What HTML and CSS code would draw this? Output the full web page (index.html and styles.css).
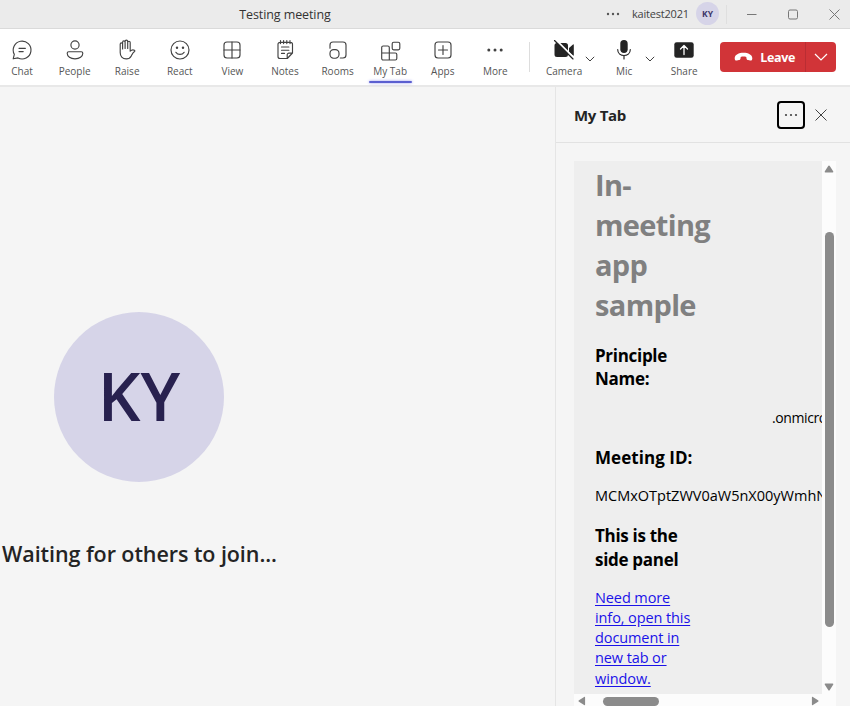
FILE: index.html
```html
<!DOCTYPE html>
<html lang="en">
<head>
<meta charset="utf-8">
<title>Testing meeting</title>
<link rel="stylesheet" href="styles.css">
</head>
<body>
<header class="titlebar">
  <div class="title"><span>Testing meeting</span></div>
  <svg class="dots" width="14" height="4" viewBox="0 0 14 4"><circle cx="2" cy="2" r="1.2"/><circle cx="7" cy="2" r="1.2"/><circle cx="12" cy="2" r="1.2"/></svg>
  <span class="user">kaitest2021</span>
  <span class="avatar-sm">KY</span>
  <span class="sep"></span>
  <svg class="win" width="103" height="14" viewBox="0 0 103 14"><path d="M6 7.500h9.500M88.500 2.500l10 10M98.500 2.500l-10 10"/><rect x="47.500" y="3" width="9" height="9" rx="1.500"/></svg>
</header>
<nav class="toolbar">
  <div class="tools">
    <div class="tool"><svg class="ico" viewBox="0 0 22 22"><path d="M2.200 19.800l1.100-4.500A8.900 8.900 0 1 1 7 18.900zM8 9.300h6.400M8 12.600h4.200"/></svg><span>Chat</span></div>
    <div class="tool"><svg class="ico" viewBox="0 0 22 22"><circle cx="11" cy="6" r="4.100"/><path d="M4.700 12.700h12.600a1.500 1.500 0 0 1 1.500 1.500c0 3.300-3.300 5.600-7.800 5.600s-7.800-2.300-7.800-5.600a1.500 1.500 0 0 1 1.500-1.500z"/></svg><span>People</span></div>
    <div class="tool"><svg class="ico" viewBox="0 0 22 22"><path d="M4.200 12V5.200c0-1.700 2.400-1.700 2.400 0V10M6.600 9V3.200c0-1.700 2.500-1.700 2.500 0V9.500M9.100 9V2.400c0-1.700 2.600-1.700 2.600 0V9.500M11.700 9V3.500c0-1.700 2.500-1.700 2.500 0V12.200c1-1 3-1.600 4.200-.9.600.4.500.9.100 1.200-1.600 1.100-2.300 2.700-3.200 4.400-1 1.900-2.300 3-5 3-4 0-6.100-2.700-6.100-6.500V11"/></svg><span>Raise</span></div>
    <div class="tool"><svg class="ico" viewBox="0 0 22 22"><circle cx="11" cy="11" r="9"/><path d="M6.900 13.300c2 2.800 6.200 2.800 8.200 0"/><circle class="fill" cx="8" cy="8.800" r="1.200"/><circle class="fill" cx="14" cy="8.800" r="1.200"/></svg><span>React</span></div>
    <div class="tool"><svg class="ico" viewBox="0 0 22 22"><rect x="3" y="3" width="16" height="16" rx="3"/><path d="M11 3v16M3 11h16"/></svg><span>View</span></div>
    <div class="tool"><svg class="ico" viewBox="0 0 22 22"><path d="M6 3.300h10.500a2 2 0 0 1 2 2V14l-5.200 5.500H6a2 2 0 0 1-2-2V5.300a2 2 0 0 1 2-2zM13.200 19.300v-3.500a1.700 1.700 0 0 1 1.700-1.700h3.400M7.500 8h7.400M7.500 11.200h7.400M7.500 14.400h3M6.500 1.600v3M9.600 1.600v3M12.800 1.600v3M16 1.600v3"/></svg><span>Notes</span></div>
    <div class="tool"><svg class="ico" viewBox="0 0 22 22"><path d="M3 9.200V6a3 3 0 0 1 3-3h10a3 3 0 0 1 3 3v10a3 3 0 0 1-3 3h-2.700"/><rect x="3" y="10.600" width="9" height="8.600" rx="3.600"/></svg><span>Rooms</span></div>
    <div class="tool active"><svg class="ico" viewBox="0 0 22 22"><path d="M4.200 6h4.600a1.500 1.500 0 0 1 1.500 1.500V20H4.200A1.500 1.500 0 0 1 2.700 18.500V7.500A1.500 1.500 0 0 1 4.200 6zM2.700 13h13.600a1.500 1.500 0 0 1 1.500 1.500v4a1.500 1.500 0 0 1-1.500 1.500h-6"/><rect x="13.200" y="2.200" width="7.600" height="7.600" rx="1.500"/></svg><span>My Tab</span></div>
    <div class="tool"><svg class="ico" viewBox="0 0 22 22"><rect x="3" y="3" width="16" height="16" rx="3"/><path d="M11 6.500v9M6.500 11h9"/></svg><span>Apps</span></div>
    <div class="tool"><svg class="ico" viewBox="0 0 22 22"><g class="fill"><circle cx="4.800" cy="11" r="1.500"/><circle cx="11" cy="11" r="1.500"/><circle cx="17.200" cy="11" r="1.500"/></g></svg><span>More</span></div>
  </div>
  <span class="divider"></span>
  <div class="device camera"><svg class="ico dark" viewBox="0 0 22 22"><path class="fill" d="M4 4h8.500a2.500 2.500 0 0 1 2.500 2.500v9A2.500 2.500 0 0 1 12.500 18H4a2.500 2.500 0 0 1-2.500-2.500v-9A2.500 2.500 0 0 1 4 4zM16 9l4-3.500q.8-.5.800.5v10q0 1-.8.500L16 13z"/><path class="gap" d="M3 1l18 18"/><path d="M1.500 1.500L20 20"/></svg><span>Camera</span></div>
  <svg class="chev" viewBox="0 0 10 6"><path d="M.8.800L5 5 9.200.800"/></svg>
  <div class="device mic"><svg class="ico dark" viewBox="0 0 22 22"><rect class="fill" x="7.300" y="1" width="7.400" height="13" rx="3.700"/><path d="M4.700 10.500c0 8 12.600 8 12.600 0M11 16.500V20"/></svg><span>Mic</span></div>
  <svg class="chev" viewBox="0 0 10 6"><path d="M.8.800L5 5 9.200.800"/></svg>
  <div class="device share"><svg class="ico dark" viewBox="0 0 22 22"><rect class="fill" x="1.300" y="3.200" width="19.400" height="15.600" rx="2.400"/><path class="white" d="M11 15.500V7M7.500 10L11 6.500l3.500 3.500"/></svg><span>Share</span></div>
  <div class="leave">
    <div class="leave-main"><svg width="19" height="10" viewBox="0 0 19 10"><path d="M9.500.8c4.600 0 8.800 2 8.800 5.400 0 1.900-.8 2.600-2.200 2.300l-2-.4c-1-.2-1.500-.8-1.600-1.700l-.2-1.500c-1.800-.6-3.800-.6-5.600 0l-.2 1.500c-.1.900-.6 1.500-1.600 1.700l-2 .4C1.500 8.800.7 8.100.7 6.200.7 2.800 4.900.8 9.500.8z"/></svg><span>Leave</span></div>
    <div class="leave-more"><svg width="14" height="8" viewBox="0 0 14 8"><path d="M1 1l6 6 6-6"/></svg></div>
  </div>
</nav>
<main class="content">
  <section class="stage">
    <div class="avatar"><span>KY</span></div>
    <p class="waiting">Waiting for others to join...</p>
  </section>
  <aside class="panel">
    <div class="panel-head">
      <h2>My Tab</h2>
      <div class="more-btn"><svg width="14" height="4" viewBox="0 0 14 4"><circle cx="2" cy="2" r="1.100"/><circle cx="7" cy="2" r="1.100"/><circle cx="12" cy="2" r="1.100"/></svg></div>
      <svg class="close" width="14" height="14" viewBox="0 0 14 14"><path d="M1.500 1.500l11 11M12.500 1.500l-11 11"/></svg>
    </div>
    <div class="frame">
      <div class="doc">
        <h1>In-<br>meeting<br>app<br>sample</h1>
        <h3>Principle<br>Name:</h3>
        <p class="domain">.onmicro</p>
        <h3 class="wide">Meeting ID:</h3>
        <p>MCMxOTptZWV0aW5nX00yWmhN</p>
        <h3>This is the<br>side panel</h3>
        <p class="link"><a>Need more<br>info, open this<br>document in<br>new tab or<br>window.</a></p>
      </div>
      <div class="vbar">
        <svg width="10" height="8" viewBox="0 0 10 8"><path d="M5 .5q.5 0 .8.500L9.300 6.500q.3 1-.8 1h-7q-1.100 0-.8-1L4.200 1Q4.500.5 5 .5z"/></svg>
        <span class="vthumb"></span>
        <svg class="down" width="10" height="8" viewBox="0 0 10 8"><path d="M5 7.500q-.5 0-.8-.5L.7 1.500Q.4.500 1.500.5h7q1.100 0 .8 1L5.800 7q-.3.500-.8.500z"/></svg>
      </div>
      <div class="hbar">
        <svg width="8" height="10" viewBox="0 0 8 10"><path d="M.5 5q0-.5.500-.8L6.500.7q.6-.2.600.8v7q0 1-.6.800L1 5.800Q.5 5.500.5 5z"/></svg>
        <span class="hthumb"></span>
        <svg class="right" width="8" height="10" viewBox="0 0 8 10"><path d="M7.500 5q0-.5-.5-.8L1.500.7Q.9.500.9 1.500v7q0 1 .6.800L7 5.800q.5-.3.500-.8z"/></svg>
      </div>
    </div>
  </aside>
</main>
</body>
</html>
```

FILE: styles.css
```css
* { box-sizing: border-box; }
body { margin: 0; width: 850px; height: 706px; overflow: hidden; background: #f5f5f5; font-family: "Open Sans", "Noto Sans", sans-serif; color: #242424; display: flex; flex-direction: column; }
h1, h2, h3, p { margin: 0; }
svg { flex: none; display: block; overflow: visible; }
.titlebar { flex: none; height: 29px; background: #ebebeb; border-bottom: 1px solid #dadada; display: flex; align-items: center; font-size: 12px; color: #424242; }
.title { width: 570px; text-align: center; color: #333; font-size: 12.500px; letter-spacing: -.1px; }
.dots { margin-left: 36px; fill: #555; }
.user { width: 57px; margin-left: 12px; font-size: 11px; letter-spacing: -.2px; white-space: nowrap; line-height: 26px; margin-top: -1px; }
.avatar-sm { width: 23px; height: 23px; margin-left: 7px; margin-top: -1px; border-radius: 50%; background: #d6d4e8; color: #3b3569; font-size: 8.500px; font-weight: 700; line-height: 23px; text-align: center; }
.sep { width: 1px; height: 19px; margin-left: 7px; background: #dfdfdf; }
.win { margin-left: 14px; fill: none; stroke: #777; stroke-width: 1; }

.toolbar { flex: none; height: 58px; background: #fff; border-bottom: 2px solid #e8e8e8; display: flex; align-items: flex-start; font-size: 10px; color: #555; }
.tools { display: flex; margin-left: -4.300px; }
.tool { width: 52.600px; height: 56px; padding-top: 10px; display: flex; flex-direction: column; align-items: center; position: relative; }
.tool span, .device span { line-height: 14px; margin-top: 3px; white-space: nowrap; }
.tool.active::after { content: ""; position: absolute; left: 5px; bottom: 2px; width: 43px; height: 2px; border-radius: 1px; background: #5b5fd0; box-shadow: 0 0 3px #8f92ec; }
.tool.active .ico { margin-top: 1px; margin-bottom: -1px; }
.ico { width: 22px; height: 22px; fill: none; stroke: #424242; stroke-width: 1.150; stroke-linejoin: round; stroke-linecap: round; }
.fill { fill: #424242; stroke: none; }
.dark { stroke: #242424; }
.dark .fill { fill: #242424; }
.dark .gap { stroke: #fff; stroke-width: 1.800; }
.dark .white { stroke: #fff; stroke-width: 1.300; }
.divider { width: 1px; height: 30px; margin: 13px 0 0 7.500px; background: #ddd; }
.device { width: 40px; padding-top: 10px; display: flex; flex-direction: column; align-items: center; }
.camera { margin-left: 14px; }
.chev { width: 10px; height: 6px; margin: 27px 0 0 1px; fill: none; stroke: #424242; stroke-width: 1; }
.mic { margin-left: 9px; }
.share { margin-left: 9px; }
.leave { flex: none; width: 116px; height: 30px; margin: 13px 0 0 16px; border-radius: 4px; background: #d13438; color: #fff; display: flex; }
.leave-main { width: 86px; padding-left: 14px; border-right: 1px solid #ba2d33; display: flex; align-items: center; gap: 7px; font-size: 12.500px; font-weight: 700; letter-spacing: -.3px; }
.leave-main span { margin-top: 1px; }
.leave-main svg { fill: #fff; }
.leave-more { flex: 1; display: flex; align-items: center; justify-content: center; }
.leave-more svg { fill: none; stroke: #fff; stroke-width: 1.200; }

.content { flex: 1; display: flex; min-height: 0; }
.stage { width: 555px; padding-top: 225px; }
.avatar { width: 170px; height: 170px; margin-left: 54px; border-radius: 50%; background: #d6d4e8; color: #28214f; font-size: 67px; font-weight: 600; line-height: 167px; text-align: center; }
.waiting { margin: 54px 0 0 2px; font-size: 21.500px; font-weight: 600; letter-spacing: -.07px; line-height: 36px; white-space: nowrap; }
.panel { width: 295px; border-left: 1px solid #e5e5e5; display: flex; flex-direction: column; }
.panel-head { height: 56px; border-bottom: 1px solid #e2e2e2; display: flex; align-items: center; padding-left: 18px; }
.panel-head h2 { width: 203px; font-size: 15px; font-weight: 700; line-height: 20px; letter-spacing: -.3px; }
.more-btn { width: 28px; height: 28px; border: 2px solid #000; border-radius: 4px; display: flex; align-items: center; justify-content: center; fill: #444; }
.close { margin-left: 9px; fill: none; stroke: #424242; stroke-width: 1; }
.frame { flex: 1; width: 262px; margin: 18px 0 0 18px; display: grid; grid-template-columns: 248px 14px; grid-template-rows: 533px 12px; }
.doc { overflow: hidden; background: #eee; padding: 4px 0 0 21px; color: #000; font-size: 14.500px; line-height: 20px; }
.doc h1 { font-size: 29px; line-height: 40px; font-weight: 700; color: #808080; letter-spacing: -.65px; }
.doc h3 { font-size: 17px; line-height: 23.300px; font-weight: 700; margin: 18.800px 0 17px; letter-spacing: -.3px; }
.doc h3.wide { letter-spacing: .05px; }
.doc h3 + p { margin-bottom: -.5px; }
.doc p { white-space: nowrap; }
.doc .domain { padding-left: 177px; font-size: 14px; letter-spacing: -.4px; line-height: 21px; margin-bottom: -1.500px; }
.doc .link { line-height: 20.200px; letter-spacing: -.1px; }
.doc a { color: #1a12e8; text-decoration: underline; text-underline-offset: 2px; }
.vbar { background: #fcfcfc; display: flex; flex-direction: column; align-items: center; padding: 4px 0 3px; fill: #8b8b8b; }
.vthumb { width: 9px; height: 395px; border-radius: 5px; background: #8b8b8b; margin-top: 59px; }
.down { margin-top: auto; }
.hbar { grid-column: 1 / 3; background: #fcfcfc; display: flex; align-items: center; padding: 2px 17px 0 4px; fill: #8b8b8b; }
.hthumb { width: 56px; height: 9px; border-radius: 5px; background: #8b8b8b; margin-left: 17px; }
.right { margin-left: auto; }
```
